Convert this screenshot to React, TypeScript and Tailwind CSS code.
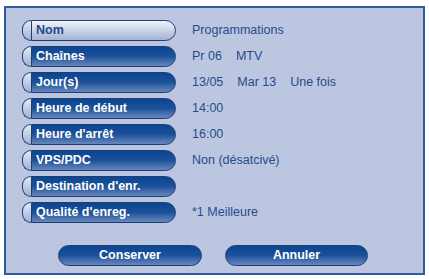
import * as React from "react";

const ROWS: {label: string; value: React.ReactNode; active?: boolean}[] = [
  {label: "Nom", value: "Programmations", active: true},
  {
    label: "Chaînes",
    value: (
      <>
        <span>Pr 06</span>
        <span className="ml-[14px]">MTV</span>
      </>
    ),
  },
  {
    label: "Jour(s)",
    value: (
      <>
        <span>13/05</span>
        <span className="ml-[14px]">Mar 13</span>
        <span className="ml-[14px]">Une fois</span>
      </>
    ),
  },
  {label: "Heure de début", value: "14:00"},
  {label: "Heure d'arrêt", value: "16:00"},
  {label: "VPS/PDC", value: "Non (désatcivé)"},
  {label: "Destination d'enr.", value: ""},
  {label: "Qualité d'enreg.", value: "*1 Meilleure"},
];

const LabelButton: React.FC<{label: string; active?: boolean}> = ({label, active}) => (
  <div className="flex h-[21px] w-[154px] shrink-0">
    <div className="w-[9px] rounded-l-full border border-r-0 border-[#1c3f73] bg-gradient-to-b from-[#e6ebf5] to-[#9fb0d2]" />
    <div
      className={`flex flex-1 items-center rounded-r-full border border-[#1c3f73] pl-[4px] text-[12.5px] font-bold ${
        active
          ? "bg-gradient-to-b from-[#f1f3f9] to-[#a4b3d3] text-[#1a4a8c]"
          : "bg-gradient-to-b from-[#0b4593] via-[#1b5199] to-[#6788bd] text-white"
      }`}
    >
      {label}
    </div>
  </div>
);

const ActionButton: React.FC<{label: string; className?: string}> = ({label, className}) => (
  <div
    className={`flex h-[21px] items-center justify-center rounded-full border border-[#1c3f73] bg-gradient-to-b from-[#0b4593] via-[#1b5199] to-[#6788bd] text-[12.5px] font-bold text-white ${className ?? ""}`}
  >
    {label}
  </div>
);

export default function App() {
  return (
    <div className="h-[279px] w-[429px] bg-white pl-[4px] pt-[6px] font-['Liberation_Sans',Arial,sans-serif]">
      <div className="flex h-[269px] w-[421px] flex-col border-2 border-[#2d5c9c] bg-[#bdc6e0] pl-[16px] pt-[12px]">
        <div className="flex flex-col gap-[5px]">
          {ROWS.map((row) => (
            <div key={row.label} className="flex items-center">
              <LabelButton label={row.label} active={row.active} />
              <div className="ml-[16px] text-[12.5px] text-[#1f4d8d]">{row.value}</div>
            </div>
          ))}
        </div>
        <div className="mt-[22px] flex pl-[36px]">
          <ActionButton label="Conserver" className="w-[144px]" />
          <ActionButton label="Annuler" className="ml-[23px] w-[143px]" />
        </div>
      </div>
    </div>
  );
}
